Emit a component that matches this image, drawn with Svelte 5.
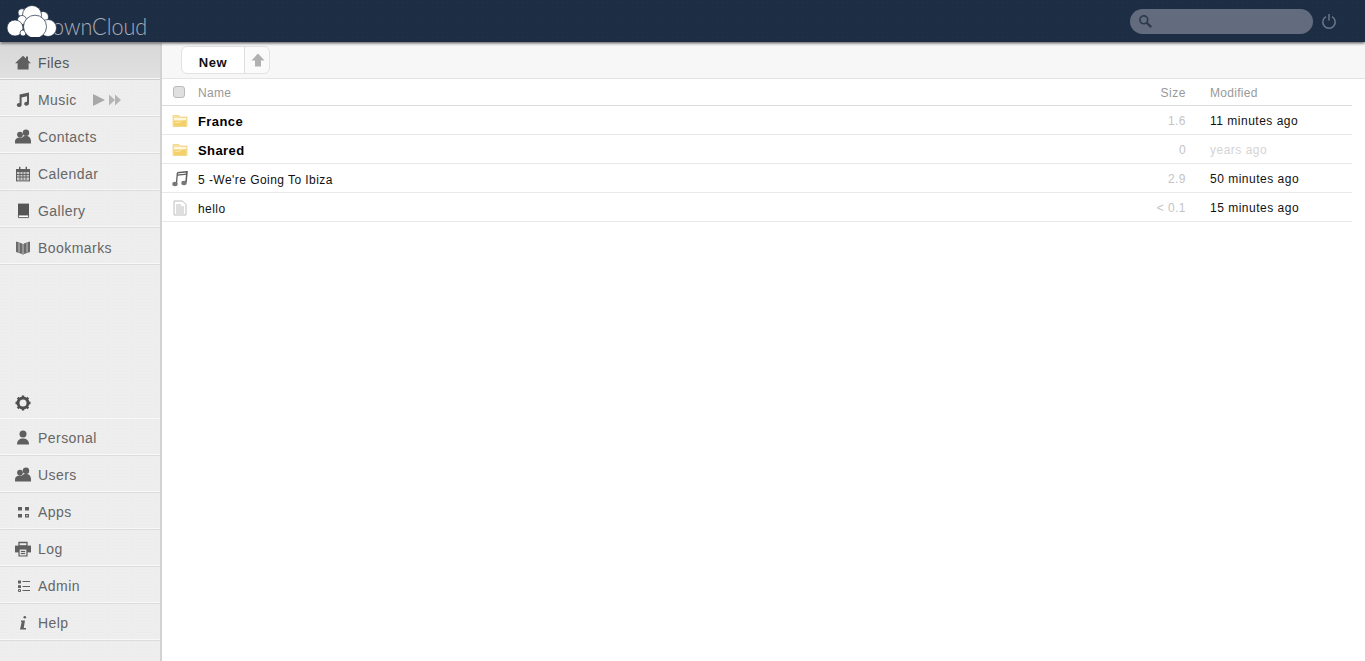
<script>
  const top = [
    { id: 'home', label: 'Files', active: true },
    { id: 'music', label: 'Music', player: true },
    { id: 'users', label: 'Contacts' },
    { id: 'cal', label: 'Calendar' },
    { id: 'gallery', label: 'Gallery' },
    { id: 'book', label: 'Bookmarks' }
  ];
  const bottom = [
    { id: 'user', label: 'Personal' },
    { id: 'users', label: 'Users' },
    { id: 'apps', label: 'Apps' },
    { id: 'print', label: 'Log' },
    { id: 'list', label: 'Admin' },
    { id: 'info', label: 'Help' }
  ];
  const files = [
    { icon: 'folder', name: 'France', dir: true, size: '1.6', mod: '11 minutes ago' },
    { icon: 'folder', name: 'Shared', dir: true, size: '0', mod: 'years ago', old: true },
    { icon: 'note', name: "5 -We're Going To Ibiza", size: '2.9', mod: '50 minutes ago' },
    { icon: 'doc', name: 'hello', size: '< 0.1', mod: '15 minutes ago' }
  ];
</script>

{#snippet navIcon(id)}
  <svg class="ni" viewBox="0 0 16 16" width="16" height="16" aria-hidden="true">
    {#if id === 'home'}
      <path d="M8 .8 L11 3.4 V1.6 H13 V5.2 L16 8.2 H13.6 V14.4 H2.6 V8.2 H0 Z" fill="#5f5f5f"/>
    {:else if id === 'music'}
      <path d="M4.6 2.6 L14 .6 V11.6 A2.4 2 0 1 1 12 9.7 V4.2 L6.6 5.4 V13 A2.4 2 0 1 1 4.6 11.1 Z" fill="#5a5a5a"/>
    {:else if id === 'users'}
      <circle cx="5" cy="5.6" r="2.9" fill="#5f5f5f"/><circle cx="11" cy="3.8" r="3.2" fill="#5f5f5f"/>
      <path d="M0 13 C0 9.4 2.5 8.4 5.2 8.4 C6 8.4 6.4 8.6 7 8.8 C7.5 7.5 9 7 11 7 C14 7 16 8.8 16 12.6 V14.5 H0 Z" fill="#5f5f5f"/>
    {:else if id === 'cal'}
      <path d="M1 3 H15 V15.4 H1 Z" fill="#5f5f5f"/>
      <path d="M2 6 H14 V14.4 H2 Z" fill="#c9c9c9"/>
      <path d="M2 8.5 H14 M2 11 H14 M5 6 V14 M8 6 V14 M11 6 V14" stroke="#5f5f5f" stroke-width=".9"/>
      <path d="M4 .8 H5.4 V4 H4 Z M10.6 .8 H12 V4 H10.6 Z" fill="#5f5f5f"/>
    {:else if id === 'gallery'}
      <path d="M3 .6 H14 V12.4 H3 Z" fill="#555"/>
      <path d="M3.4 12 H13.6 V14.6 H3.4 Z" fill="#fff" stroke="#555" stroke-width=".9"/>
    {:else if id === 'book'}
      <path d="M1 1.5 L7 3.4 L8 4.4 L9 3.4 L15 1.5 V12 L9 14 L8 15 L7 14 L1 12 Z" fill="#6a6a6a"/>
      <path d="M8 4.4 V15 M4 3.2 V12.5 M12 3.2 V12.5" stroke="#c4c4c4" stroke-width="1"/>
    {:else if id === 'user'}
      <circle cx="8" cy="4" r="3.5" fill="#5f5f5f"/>
      <path d="M2 14.6 C2 10 4.6 8.4 8 8.4 C11.4 8.4 14 10 14 14.6 Z" fill="#5f5f5f"/>
    {:else if id === 'apps'}
      <path d="M3 3 H7 V6.6 H3 Z M10 3 H14 V6.6 H10 Z M3 10 H7 V13.4 H3 Z" fill="#5f5f5f"/>
      <path d="M10.6 10.6 H13.4 V12.9 H10.6 Z" fill="none" stroke="#5f5f5f" stroke-width="1.2"/>
    {:else if id === 'print'}
      <path d="M4 1.5 H12 V5 H4 Z" fill="none" stroke="#5f5f5f" stroke-width="1.3"/>
      <path d="M0 4.6 H16 V11.4 H0 Z" fill="#5f5f5f"/>
      <path d="M4 8 H12 V15 H4 Z" fill="#ddd" stroke="#5f5f5f" stroke-width="1.2"/>
      <path d="M6 10.5 H10 M6 12.5 H10" stroke="#5f5f5f"/>
    {:else if id === 'list'}
      <path d="M3 2.6 H6 V5.6 H3 Z M3 7.2 H6 V10 H3 Z" fill="#5f5f5f"/>
      <path d="M3.5 11.5 H5.5 V13.5 H3.5 Z" fill="none" stroke="#5f5f5f"/>
      <path d="M7.5 3.5 H15 M7.5 8.5 H15 M7.5 12.5 H15" stroke="#5f5f5f"/>
    {:else if id === 'info'}
      <circle cx="9.8" cy="2.2" r="1.3" fill="#5f5f5f"/>
      <path d="M6 5.6 H10 L8.7 13 H11 V14.4 H5 L6.7 7 H6 Z" fill="#5f5f5f"/>
    {/if}
  </svg>
{/snippet}

<div class="page">
  <header class="top">
    <div class="logo" aria-label="ownCloud">
      <span class="wordmark">ownCloud</span>
      <svg class="cloud" viewBox="0 0 52 32" width="52" height="32" aria-hidden="true">
        <g fill="#fff" stroke="#1d2d44" stroke-width=".7">
          <circle cx="16" cy="7.7" r="4"/>
          <circle cx="37" cy="12" r="5.5"/>
          <circle cx="26" cy="10" r="9.5"/>
          <circle cx="16" cy="15" r="4.5"/>
          <circle cx="9" cy="23" r="8"/>
          <circle cx="42" cy="23" r="8.5"/>
          <circle cx="17" cy="28" r="3"/>
          <circle cx="29" cy="21.7" r="11.5"/>
        </g>
      </svg>
    </div>
    <div class="right">
      <div class="search">
        <svg viewBox="0 0 16 16" width="15" height="15" aria-hidden="true">
          <circle cx="6.2" cy="6.2" r="4.2" fill="none" stroke="#2c3a50" stroke-width="1.8"/>
          <path d="M9.4 9.4 L14 14" stroke="#2c3a50" stroke-width="2.4"/>
        </svg>
      </div>
      <svg class="power" viewBox="0 0 16 16" width="16" height="16" aria-hidden="true">
        <path d="M5 3.6 A6.2 6.2 0 1 0 11 3.6" fill="none" stroke="#6c7687" stroke-width="1.5"/>
        <path d="M8 1 V7.5" stroke="#6c7687" stroke-width="1.5"/>
      </svg>
    </div>
  </header>

  <div class="main">
    <nav class="side">
      <ul class="nav">
        {#each top as item}
          <li class:active={item.active}>
            {@render navIcon(item.id)}
            <span>{item.label}</span>
            {#if item.player}
              <svg class="player" viewBox="0 0 30 14" width="30" height="14" aria-hidden="true">
                <path d="M1 1 L13 7 L1 13 Z" fill="#a8a8a8"/>
                <path d="M17 1.5 L23 7 L17 12.5 Z M23 1.5 L29 7 L23 12.5 Z" fill="#b4b4b4"/>
              </svg>
            {/if}
          </li>
        {/each}
      </ul>
      <div class="spacer"></div>
      <div class="gear">
        <svg viewBox="0 0 16 16" width="16" height="16" aria-hidden="true">
          <circle cx="8" cy="8" r="5" fill="none" stroke="#4f4f4f" stroke-width="3"/>
          <path d="M8 .5 V15.5 M.5 8 H15.5 M2.7 2.7 L13.3 13.3 M13.3 2.7 L2.7 13.3" stroke="#4f4f4f" stroke-width="2.4" stroke-dasharray="2.4 10.2 2.4"/>
        </svg>
      </div>
      <ul class="nav lower">
        {#each bottom as item}
          <li>
            {@render navIcon(item.id)}
            <span>{item.label}</span>
          </li>
        {/each}
      </ul>
      <div class="foot"></div>
    </nav>

    <main class="content">
      <div class="controls">
        <div class="btns">
          <span class="new">New</span>
          <span class="up">
            <svg viewBox="0 0 14 14" width="14" height="14" aria-hidden="true">
              <path d="M7 .5 L13.5 7.5 H10 V13.5 H4 V7.5 H.5 Z" fill="#b0b0b0"/>
            </svg>
          </span>
        </div>
      </div>
      <div class="table">
        <div class="row head">
          <span class="ic">
            <span class="check"></span>
          </span>
          <span class="name">Name</span>
          <span class="size">Size</span>
          <span class="mod">Modified</span>
        </div>
        {#each files as f}
          <div class="row">
            <span class="ic">
              {#if f.icon === 'folder'}
                <svg viewBox="0 0 16 16" width="16" height="16" aria-hidden="true">
                  <path d="M1 2.5 H7 L8 4 H15 V13.5 H1 Z" fill="#f8e3a0" stroke="#efd384" stroke-width=".8"/>
                  <path d="M2 6 H14" stroke="#fff" stroke-width="1.4"/>
                  <path d="M2 8 L9 8 L14 7.2 V13 H2 Z" fill="#f3d068"/>
                  <path d="M3 9.6 H6 L9 8.6" fill="none" stroke="#fbe9b2" stroke-width=".9"/>
                </svg>
              {:else if f.icon === 'note'}
                <svg viewBox="0 0 16 16" width="16" height="16" aria-hidden="true">
                  <path d="M5.4 1.8 L15 .8 L14 11.5" fill="none" stroke="#5e5e5e" stroke-width="1.6"/>
                  <path d="M5.4 1.8 L4.4 13 M5.6 4.2 L14.6 3.2" fill="none" stroke="#5e5e5e" stroke-width="1.3"/>
                  <ellipse cx="3" cy="13" rx="2.7" ry="2.2" fill="#777"/>
                  <ellipse cx="12" cy="12" rx="2.7" ry="2.2" fill="#777"/>
                </svg>
              {:else}
                <svg viewBox="0 0 16 16" width="16" height="16" aria-hidden="true">
                  <path d="M2 1 H10.5 L14 4.5 V15 H2 Z" fill="#fff" stroke="#bcbcbc"/>
                  <path d="M4 5 H9 M4 7 H12 M4 9 H12 M4 11 H12 M4 13 H12" stroke="#bdbdbd"/>
                </svg>
              {/if}
            </span>
            <span class="name" class:dir={f.dir}>{f.name}</span>
            <span class="size val">{f.size}</span>
            <span class="mod val" class:old={f.old}>{f.mod}</span>
          </div>
        {/each}
      </div>
    </main>
  </div>
</div>

<style>
  :global(body) {
    margin: 0;
    background: #fff;
    font-family: "Liberation Sans", Arial, sans-serif;
  }
  .page {
    height: 661px;
    display: flex;
    flex-direction: column;
    overflow: hidden;
  }
  .top {
    height: 42px;
    flex: none;
    background-color: #1d2d44;
    background-image: radial-gradient(#22324a 0.8px, transparent 0.9px);
    background-size: 5px 5px;
    box-shadow: 0 1px 3px rgba(0, 0, 0, .75);
    display: flex;
    justify-content: space-between;
    align-items: center;
    padding: 0 28px 0 6px;
    position: relative;
    z-index: 2;
    box-sizing: border-box;
  }
  .logo {
    height: 42px;
    position: relative;
    width: 150px;
  }
  .cloud {
    position: absolute;
    left: 0;
    top: 5px;
  }
  .wordmark {
    position: absolute;
    left: 46px;
    top: 10px;
    color: #a8aeb8;
    font-family: Lato, "Liberation Sans", sans-serif;
    font-weight: 300;
    font-size: 24px;
    line-height: 32px;
    transform: scaleX(.9);
    transform-origin: left center;
  }
  .right {
    display: flex;
    align-items: center;
    gap: 8px;
  }
  .search {
    width: 183px;
    height: 25px;
    border-radius: 13px;
    background: #626c7e;
    display: flex;
    align-items: center;
    padding-left: 8px;
    box-sizing: border-box;
  }
  .main {
    flex: 1;
    display: flex;
    min-height: 0;
    padding-top: 1px;
  }
  .side {
    width: 160px;
    flex: none;
    background-color: #eeeeee;
    background-image: radial-gradient(#eaeaea 0.6px, transparent 0.7px);
    background-size: 3px 3px;
    border-right: 2px solid #d2d2d2;
    display: flex;
    flex-direction: column;
  }
  .nav {
    list-style: none;
    margin: 0;
    padding: 0;
  }
  .nav li {
    height: 33px;
    border-bottom: 1px solid #dcdcdc;
    box-shadow: inset 0 -1px 0 #f8f8f8;
    display: flex;
    align-items: center;
    padding: 3px 0 0 15px;
    gap: 7px;
    color: #666;
    font-size: 14px;
    letter-spacing: .45px;
    position: relative;
  }
  .nav li.active {
    background: linear-gradient(#d8d8d8, #e0e0e0);
    color: #555;
    border-bottom-color: #cfcfcf;
  }
  .nav.lower {
    border-top: 1px solid #f8f8f8;
  }
  .nav.lower li {
    padding-top: 1px;
    height: 35px;
  }
  .ni { flex: none; }
  .player {
    margin-left: 8px;
  }
  .spacer { flex: 1; }
  .gear {
    height: 30px;
    padding-left: 15px;
    display: flex;
    align-items: center;
  }
  .foot { height: 20px; flex: none; }
  .content {
    flex: 1;
    min-width: 0;
    background: #fff;
    display: flex;
    flex-direction: column;
  }
  .controls {
    height: 32px;
    background: #f7f7f7;
    border-bottom: 1px solid #e4e4e4;
    display: flex;
    align-items: flex-start;
    padding: 3px 0 0 19px;
    flex: none;
  }
  .btns {
    display: flex;
    height: 28px;
    border: 1px solid #e2e2e2;
    border-radius: 6px;
    background: #fafafa;
    box-sizing: border-box;
  }
  .new {
    width: 63px;
    border-right: 1px solid #dedede;
    background: #fff;
    border-radius: 6px 0 0 6px;
    font-weight: 700;
    font-size: 13px;
    letter-spacing: .6px;
    color: #111;
    display: flex;
    align-items: center;
    justify-content: center;
    padding-top: 5px;
    box-sizing: border-box;
  }
  .up {
    width: 24px;
    display: flex;
    align-items: center;
    justify-content: center;
    padding: 0 0 0 2px;
    box-sizing: border-box;
  }
  .table {
    margin-right: 13px;
  }
  .row {
    height: 27px;
    border-bottom: 1px solid #e8e8e8;
    display: flex;
    align-items: center;
    font-size: 12px;
    color: #111;
    letter-spacing: .45px;
    padding: 1px 0 0 10px;
  }
  .row .name {
    padding-top: 2px;
  }
  .head {
    height: 25px;
    border-bottom-color: #dcdcdc;
    color: #999;
    letter-spacing: .3px;
  }
  .head .name {
    padding-top: 0;
  }
  .ic {
    width: 26px;
    flex: none;
    display: flex;
    align-items: center;
  }
  .check {
    width: 10px;
    height: 10px;
    margin-left: 1px;
    border-radius: 3px;
    background: #e0e0e0;
    border: 1px solid #bbb;
    margin-top: -1px;
  }
  .name { flex: 1; }
  .dir {
    font-weight: 700;
    font-size: 13px;
    letter-spacing: .4px;
    color: #000;
  }
  .size {
    width: 60px;
    text-align: right;
  }
  .head .size { letter-spacing: .55px; }
  .size.val { color: #c4c4c4; }
  .mod {
    width: 142px;
    margin-left: 24px;
    letter-spacing: .5px;
  }
  .head .mod { letter-spacing: .3px; }
  .mod.old { color: #d4d4d4; }
</style>
